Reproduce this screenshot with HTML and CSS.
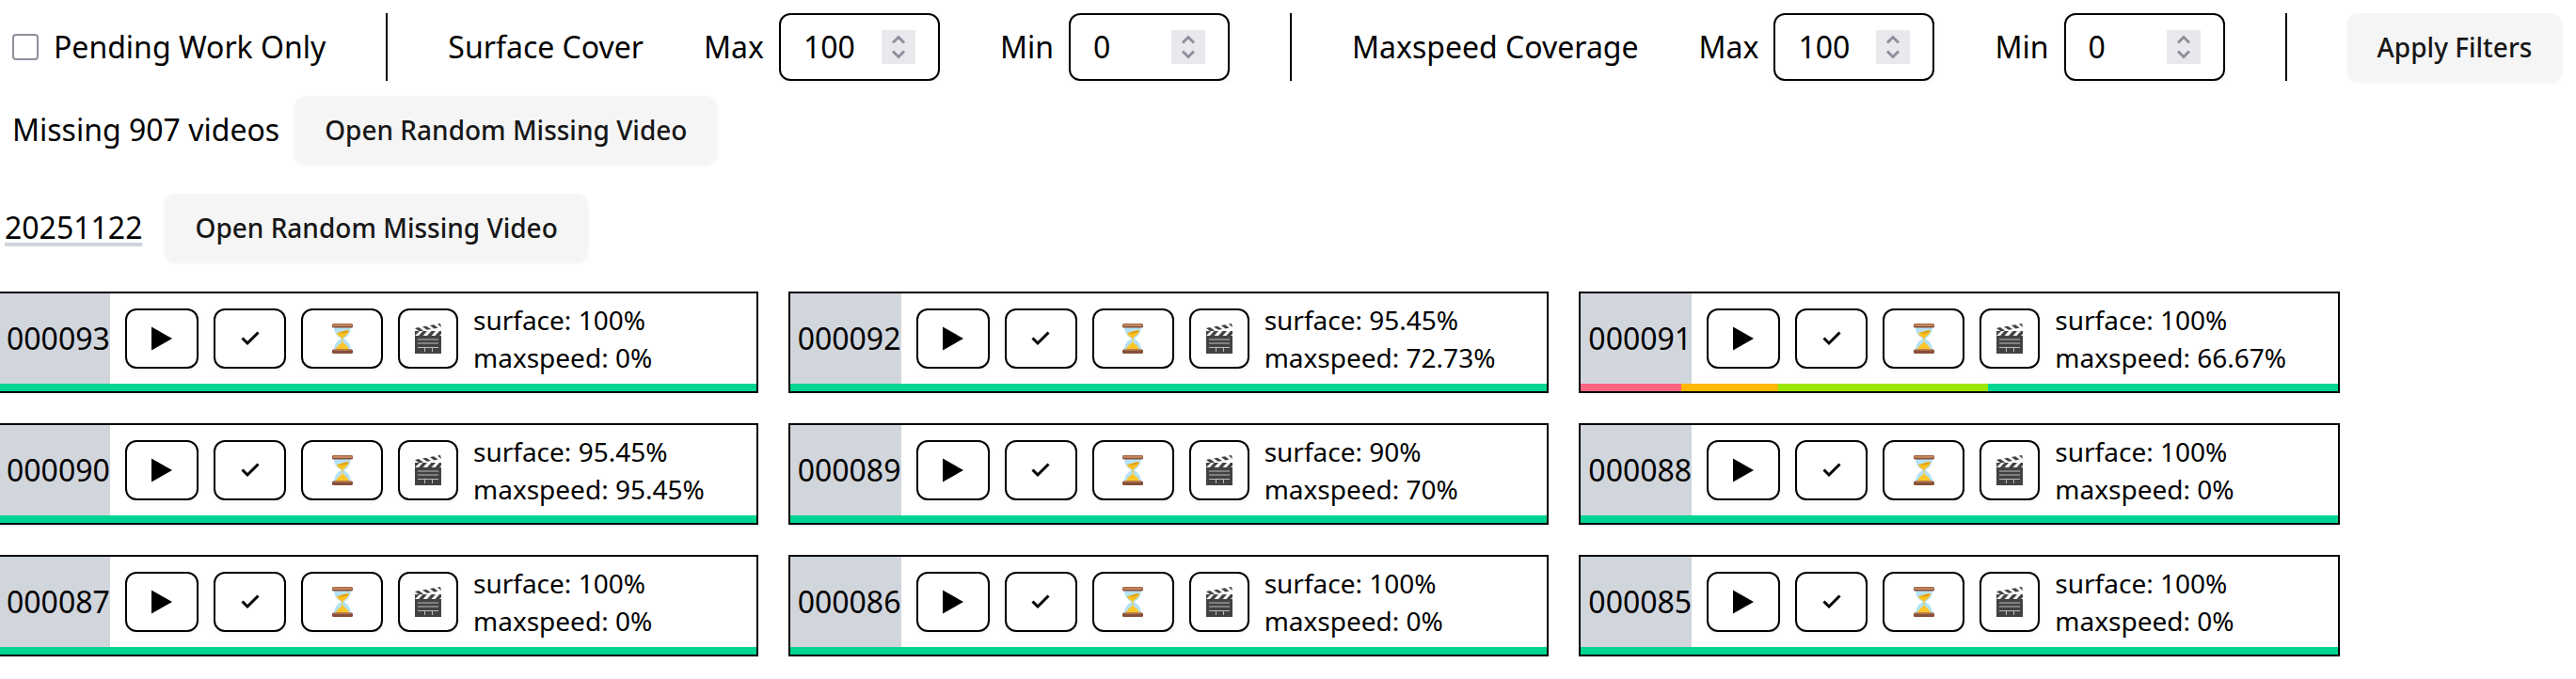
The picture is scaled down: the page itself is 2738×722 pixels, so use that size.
FILE: index.html
```html
<!DOCTYPE html>
<html lang="en">
<head>
  <meta charset="utf-8">
  <title>Videos</title>
  <link rel="stylesheet" href="styles.css">
</head>
<body>
  <!-- shared icons -->
  <svg class="sprite" aria-hidden="true">
    <symbol id="play" viewBox="0 0 22 26"><path d="M0 0.5 L22 13 L0 25.5 Z" fill="#000"/></symbol>
    <symbol id="check" viewBox="0 0 20 16"><path d="M1.5 7.5 L7 13 L18.5 1.5" fill="none" stroke="#000" stroke-width="3"/></symbol>
    <symbol id="hourglass" viewBox="0 0 22 32">
      <path d="M2 3 H20 C20 10 17 13 12.500 16 C17 19 20 22 20 29 H2 C2 22 5 19 9.500 16 C5 13 2 10 2 3Z" fill="#b3e1f7"/>
      <path d="M4.500 10 C9 10 12 6.500 18 7 C17.500 12 13 13 11 16 C9 14 6 13 4.500 10Z" fill="#fbc11f"/>
      <path d="M6 10 C10 10 13 7 17.500 7.500 C17 10 10 11.500 6 10Z" fill="#d99a1a"/>
      <path d="M10.500 15 H11.500 V20 C14 22 18 25 18 28 H4 C4 25 8 22 10.500 20Z" fill="#fcc62b"/>
      <rect x="0" y="0" width="22" height="4.500" rx="1.5" fill="#855039"/>
      <rect x="0" y="27.500" width="22" height="4.500" rx="1.5" fill="#855039"/>
      <rect x="0.500" y="0.500" width="21" height="2.500" rx="1" fill="#c4855c"/>
      <rect x="2" y="27.500" width="18" height="1.5" fill="#b5754f"/>
    </symbol>
    <symbol id="clapper" viewBox="0 0 30 32">
      <rect x="1" y="13" width="28" height="19" fill="#424242"/>
      <path d="M0 5 L28 0 L29 4 L1 9Z" fill="#f5f5f5"/>
      <path d="M1 5 L5 4 L10 7.5 L6 8.5Z M9 3.4 L13 2.7 L18 6 L14 6.8Z M17 2 L21 1.2 L25.5 4.6 L21.5 5.4Z M25 0.6 L28 0 L29 4Z" fill="#424242"/>
      <rect x="1" y="8" width="28" height="5" fill="#f5f5f5"/>
      <path d="M1 8 L6 8 L1 13Z M9.500 8 H14 L9.500 13 H5Z M18.500 8 H23 L18.500 13 H14Z M27 8 H29 V11 L27 13 H22.500Z" fill="#424242"/>
      <path d="M4 17 H26 M4 21 H26 M4 25.500 H26 M11.500 25.500 V30 M19.500 25.500 V30" stroke="#bdbdbd" stroke-width="1"/>
    </symbol>
    <symbol id="stepper" viewBox="0 0 36 36">
      <rect width="36" height="36" fill="#e9e9ed"/>
      <path d="M12 13.500 L18 7.500 L24 13.500 M12 22.500 L18 28.500 L24 22.500" fill="none" stroke="#8f8f9d" stroke-width="3"/>
    </symbol>
  </svg>

  <form class="filters">
    <label class="field pending"><input type="checkbox" class="checkbox"> Pending Work Only</label>
    <div class="divider"></div>
    <span>Surface Cover</span>
    <label class="field">Max <span class="number"><input type="number" value="100"><svg><use href="#stepper"/></svg></span></label>
    <label class="field">Min <span class="number"><input type="number" value="0"><svg><use href="#stepper"/></svg></span></label>
    <div class="divider"></div>
    <span>Maxspeed Coverage</span>
    <label class="field">Max <span class="number"><input type="number" value="100"><svg><use href="#stepper"/></svg></span></label>
    <label class="field">Min <span class="number"><input type="number" value="0"><svg><use href="#stepper"/></svg></span></label>
    <div class="divider"></div>
    <button type="button" class="btn">Apply Filters</button>
  </form>

  <div class="missing">
    <span>Missing 907 videos</span>
    <button type="button" class="btn">Open Random Missing Video</button>
  </div>

  <div class="day">
    <a class="date" href="#20251122">20251122</a>
    <button type="button" class="btn">Open Random Missing Video</button>
  </div>

  <div class="videos" id="videos"></div>

  <script src="script.js"></script>
</body>
</html>
```
FILE: styles.css
```css
* {
  box-sizing: border-box;
}

body {
  margin: 0;
  padding-top: 14px;
  background: #fff;
  color: #000;
  font-family: "Noto Sans", sans-serif;
  font-size: 32px;
  line-height: 48px;
  overflow-x: hidden;
}

.sprite {
  position: absolute;
  width: 0;
  height: 0;
}

.filters {
  display: flex;
  align-items: center;
  gap: 64px;
  padding-left: 13px;
  white-space: nowrap;
}

.field {
  display: flex;
  align-items: center;
  gap: 16px;
}

.checkbox {
  appearance: none;
  width: 28px;
  height: 28px;
  margin: 0;
  border: 2px solid #8f8f9d;
  border-radius: 4px;
  background: #fff;
}

.divider {
  width: 2px;
  height: 72px;
  background: #000;
}

.number {
  display: flex;
  align-items: center;
  width: 171px;
  height: 72px;
  padding: 0 24px;
  border: 2px solid #000;
  border-radius: 12px;
  box-shadow: 0 2px 4px rgba(0, 0, 0, 0.05);
}

.number input {
  appearance: textfield;
  flex: 1;
  min-width: 0;
  padding: 0;
  border: 0;
  outline: 0;
  background: none;
  color: inherit;
  font: inherit;
}

.number input::-webkit-inner-spin-button {
  display: none;
}

.number svg {
  width: 36px;
  height: 36px;
}

.btn {
  height: 72px;
  padding: 0 32px;
  border: 0;
  border-radius: 12px;
  background: #f5f5f5;
  box-shadow: 0 2px 4px rgba(0, 0, 0, 0.05);
  color: #171717;
  font: 500 28px/40px "Noto Sans", sans-serif;
}

.missing {
  display: flex;
  align-items: center;
  gap: 16px;
  margin-top: 16px;
  padding-left: 13px;
}

.day {
  display: flex;
  align-items: center;
  gap: 24px;
  margin-top: 32px;
  padding-left: 5px;
}

.date {
  color: inherit;
  text-decoration: underline 4px #d1d5dc;
  text-underline-offset: 4px;
}

.videos {
  display: grid;
  grid-template-columns: repeat(3, 1fr);
  gap: 32px;
  margin: 32px 251px 0 -3px;
}

.video {
  border: 2px solid #000;
}

.row {
  display: flex;
  align-items: center;
  gap: 16px;
  height: 96px;
}

.name {
  display: flex;
  align-items: center;
  align-self: stretch;
  width: 118px;
  padding-left: 8px;
  background: #d1d5dc;
}

.icon-btn {
  display: flex;
  align-items: center;
  justify-content: center;
  height: 64px;
  padding: 0;
  border: 2px solid #000;
  border-radius: 12px;
  background: #fff;
  box-shadow: 0 2px 4px rgba(0, 0, 0, 0.05);
}

.open {
  width: 78px;
}

.done {
  width: 77px;
}

.wait {
  width: 87px;
}

.clip {
  width: 64px;
}

.open svg {
  width: 22px;
  height: 26px;
}

.done svg {
  width: 20px;
  height: 16px;
}

.wait svg {
  width: 22px;
  height: 32px;
}

.clip svg {
  width: 30px;
  height: 32px;
}

.stats {
  font-size: 28px;
  line-height: 40px;
}

.bar {
  display: flex;
  height: 8px;
  background: #00d492;
}

.red {
  background: #ff637e;
}

.amber {
  background: #ffb900;
}

.lime {
  background: #9ae600;
}
```
FILE: script.js
```js
const videos = [
  { name: '000093', surface: 100, maxspeed: 0 },
  { name: '000092', surface: 95.45, maxspeed: 72.73 },
  { name: '000091', surface: 100, maxspeed: 66.67, bar: { red: 13.3, amber: 12.8, lime: 27.7 } },
  { name: '000090', surface: 95.45, maxspeed: 95.45 },
  { name: '000089', surface: 90, maxspeed: 70 },
  { name: '000088', surface: 100, maxspeed: 0 },
  { name: '000087', surface: 100, maxspeed: 0 },
  { name: '000086', surface: 100, maxspeed: 0 },
  { name: '000085', surface: 100, maxspeed: 0 },
];

const button = (cls, icon, label) =>
  `<button type="button" class="icon-btn ${cls}" aria-label="${label}"><svg><use href="#${icon}"/></svg></button>`;

document.getElementById('videos').innerHTML = videos.map(v => `
  <div class="video">
    <div class="row">
      <div class="name">${v.name}</div>
      ${button('open', 'play', 'Play')}
      ${button('done', 'check', 'Done')}
      ${button('wait', 'hourglass', 'Wait')}
      ${button('clip', 'clapper', 'Clip')}
      <div class="stats">
        <div>surface: ${v.surface}%</div>
        <div>maxspeed: ${v.maxspeed}%</div>
      </div>
    </div>
    <div class="bar">
      ${Object.entries(v.bar || {}).map(([color, width]) => `<div class="${color}" style="width: ${width}%"></div>`).join('')}
    </div>
  </div>`).join('');
```
